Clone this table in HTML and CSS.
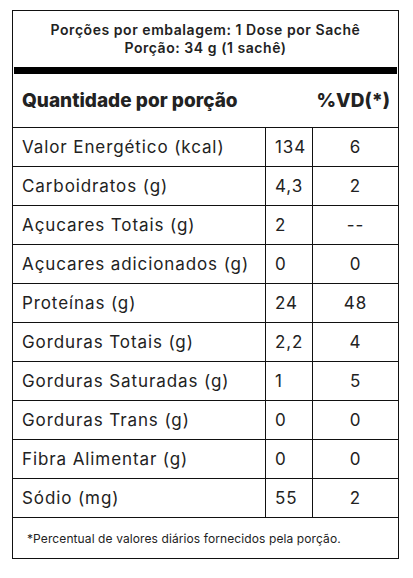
FILE: index.html
```html
<!DOCTYPE html>
<html lang="pt-BR">
<head>
  <meta charset="UTF-8">
  <meta name="viewport" content="width=device-width, initial-scale=1.0">
  <title>Tabela nutricional</title>
  <link rel="stylesheet" href="styles.css">
</head>
<body>
  <div class="label">
    <div class="serving">
      <p>Porções por embalagem: 1 Dose por Sachê</p>
      <p>Porção: 34 g (1 sachê)</p>
    </div>
    <div class="bar"></div>
    <div class="title">
      <span>Quantidade por porção</span>
      <span>%VD(*)</span>
    </div>
    <table class="facts">
      <tr><td>Valor Energético (kcal)</td><td class="qty">134</td><td class="vd">6</td></tr>
      <tr><td>Carboidratos (g)</td><td class="qty">4,3</td><td class="vd">2</td></tr>
      <tr><td>Açucares Totais (g)</td><td class="qty">2</td><td class="vd">--</td></tr>
      <tr><td>Açucares adicionados (g)</td><td class="qty">0</td><td class="vd">0</td></tr>
      <tr><td>Proteínas (g)</td><td class="qty">24</td><td class="vd">48</td></tr>
      <tr><td>Gorduras Totais (g)</td><td class="qty">2,2</td><td class="vd">4</td></tr>
      <tr><td>Gorduras Saturadas (g)</td><td class="qty">1</td><td class="vd">5</td></tr>
      <tr><td>Gorduras Trans (g)</td><td class="qty">0</td><td class="vd">0</td></tr>
      <tr><td>Fibra Alimentar (g)</td><td class="qty">0</td><td class="vd">0</td></tr>
      <tr><td>Sódio (mg)</td><td class="qty">55</td><td class="vd">2</td></tr>
    </table>
    <p class="note">*Percentual de valores diários fornecidos pela porção.</p>
  </div>
</body>
</html>
```

FILE: styles.css
```css
body {
  margin: 0;
  background: #fff;
  font-family: Inter, "Noto Sans", sans-serif;
  color: #222;
}

.label {
  width: 385px;
  margin: 10px 0 0 12px;
  border: 1px solid #111;
}

.serving {
  height: 56px;
  display: flex;
  flex-direction: column;
  justify-content: center;
  align-items: center;
}

.serving p {
  margin: 0;
  font-size: 14px;
  font-weight: 600;
  line-height: 18px;
  letter-spacing: 0.55px;
}

.bar {
  height: 7px;
  margin: 0 1px;
  background: #000;
}

.title {
  height: 53px;
  display: flex;
  justify-content: space-between;
  align-items: center;
  padding: 0 8px 0 9px;
  border-bottom: 1px solid #111;
  font-size: 19px;
  font-weight: 800;
}

.facts {
  width: 100%;
  border-collapse: collapse;
}

.facts td {
  height: 38px;
  padding: 0 0 0 9px;
  border-bottom: 1px solid #111;
  font-size: 17px;
  letter-spacing: 0.9px;
}

.facts .qty {
  width: 37px;
  border-left: 1px solid #111;
  border-right: 1px solid #111;
}

.facts .vd {
  width: 85px;
  padding: 0;
  text-align: center;
}

.note {
  margin: 0;
  height: 40px;
  padding-left: 14px;
  display: flex;
  align-items: center;
  font-size: 12px;
  letter-spacing: 0.1px;
}
```
